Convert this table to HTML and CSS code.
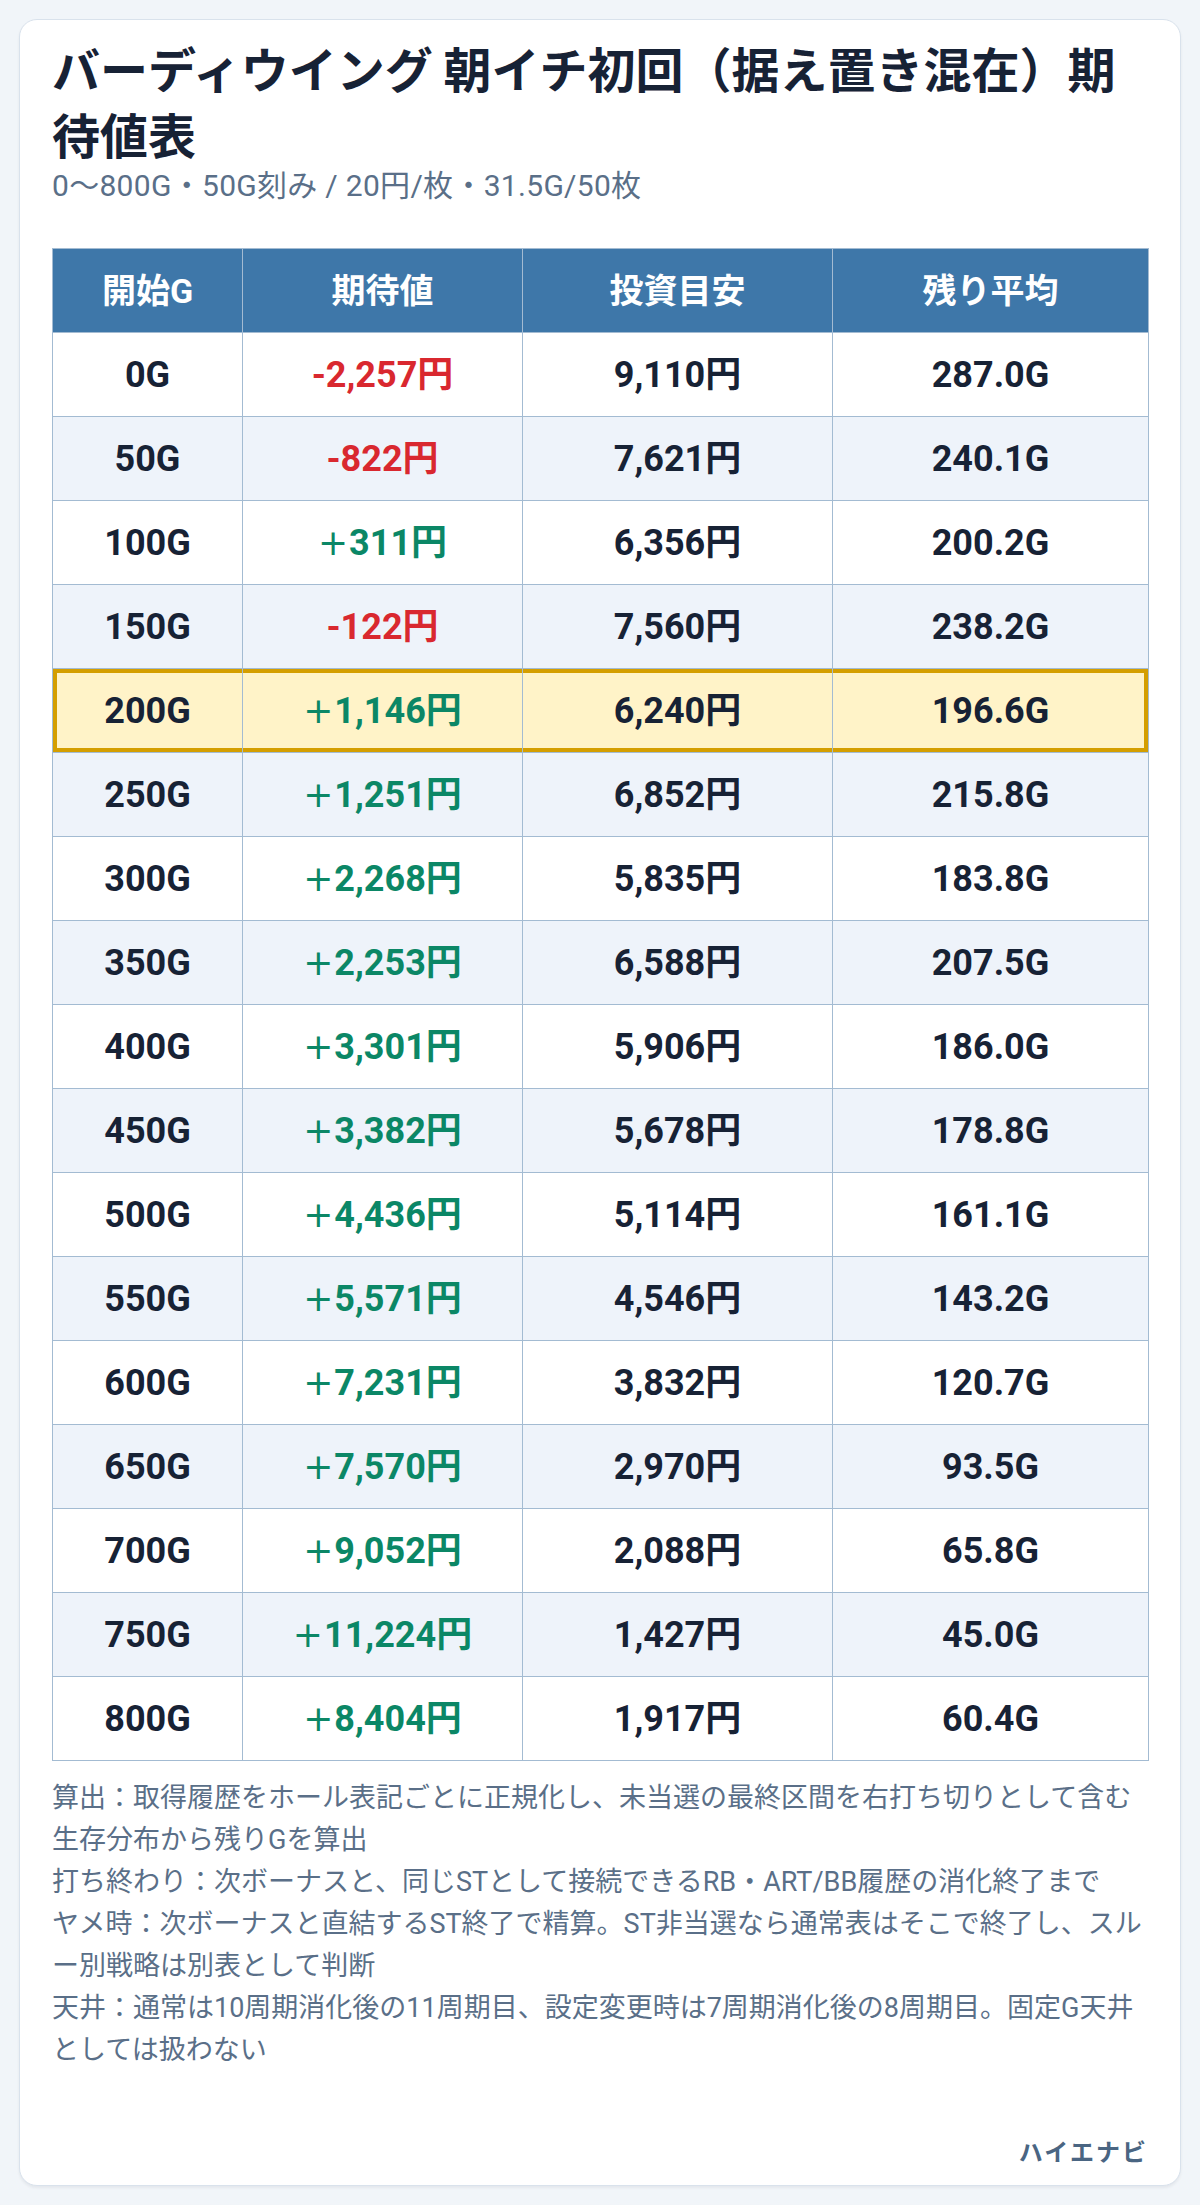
FILE: index.html
```html
<!DOCTYPE html>
<html lang="ja">
<head>
<meta charset="utf-8">
<title>バーディウイング 朝イチ初回 期待値表</title>
<link rel="stylesheet" href="styles.css">
</head>
<body>
<main class="card">
  <h1 class="title">バーディウイング 朝イチ初回（据え置き混在）期待値表</h1>
  <p class="subtitle">0〜800G・50G刻み / 20円/枚・31.5G/50枚</p>
  <table class="ev-table">
    <colgroup>
      <col class="c1"><col class="c2"><col class="c3"><col class="c4">
    </colgroup>
    <thead>
      <tr><th>開始G</th><th>期待値</th><th>投資目安</th><th>残り平均</th></tr>
    </thead>
    <tbody>
      <tr><td>0G</td><td class="neg">-2,257円</td><td>9,110円</td><td>287.0G</td></tr>
      <tr><td>50G</td><td class="neg">-822円</td><td>7,621円</td><td>240.1G</td></tr>
      <tr><td>100G</td><td class="pos"><span class="sign">+</span>311円</td><td>6,356円</td><td>200.2G</td></tr>
      <tr><td>150G</td><td class="neg">-122円</td><td>7,560円</td><td>238.2G</td></tr>
      <tr class="hl"><td>200G</td><td class="pos"><span class="sign">+</span>1,146円</td><td>6,240円</td><td>196.6G</td></tr>
      <tr><td>250G</td><td class="pos"><span class="sign">+</span>1,251円</td><td>6,852円</td><td>215.8G</td></tr>
      <tr><td>300G</td><td class="pos"><span class="sign">+</span>2,268円</td><td>5,835円</td><td>183.8G</td></tr>
      <tr><td>350G</td><td class="pos"><span class="sign">+</span>2,253円</td><td>6,588円</td><td>207.5G</td></tr>
      <tr><td>400G</td><td class="pos"><span class="sign">+</span>3,301円</td><td>5,906円</td><td>186.0G</td></tr>
      <tr><td>450G</td><td class="pos"><span class="sign">+</span>3,382円</td><td>5,678円</td><td>178.8G</td></tr>
      <tr><td>500G</td><td class="pos"><span class="sign">+</span>4,436円</td><td>5,114円</td><td>161.1G</td></tr>
      <tr><td>550G</td><td class="pos"><span class="sign">+</span>5,571円</td><td>4,546円</td><td>143.2G</td></tr>
      <tr><td>600G</td><td class="pos"><span class="sign">+</span>7,231円</td><td>3,832円</td><td>120.7G</td></tr>
      <tr><td>650G</td><td class="pos"><span class="sign">+</span>7,570円</td><td>2,970円</td><td>93.5G</td></tr>
      <tr><td>700G</td><td class="pos"><span class="sign">+</span>9,052円</td><td>2,088円</td><td>65.8G</td></tr>
      <tr><td>750G</td><td class="pos"><span class="sign">+</span>11,224円</td><td>1,427円</td><td>45.0G</td></tr>
      <tr><td>800G</td><td class="pos"><span class="sign">+</span>8,404円</td><td>1,917円</td><td>60.4G</td></tr>
    </tbody>
  </table>
  <div class="notes">
    <p>算出：取得履歴をホール表記ごとに正規化し、未当選の最終区間を右打ち切りとして含む生存分布から残りGを算出</p>
    <p>打ち終わり：次ボーナスと、同じSTとして接続できるRB・ART/BB履歴の消化終了まで</p>
    <p>ヤメ時：次ボーナスと直結するST終了で精算。ST非当選なら通常表はそこで終了し、スルー別戦略は別表として判断</p>
    <p>天井：通常は10周期消化後の11周期目、設定変更時は7周期消化後の8周期目。固定G天井としては扱わない</p>
  </div>
  <footer class="brand">ハイエナビ</footer>
</main>
</body>
</html>
```
FILE: styles.css
```css
* { box-sizing: border-box; }

html, body {
  margin: 0;
  padding: 0;
}

body {
  background: #f1f5f9;
  padding: 19px;
  font-family: "Roboto", "Noto Sans CJK JP", sans-serif;
  color: #172235;
}

.card {
  display: flex;
  flex-direction: column;
  min-height: 2167px;
  background: #ffffff;
  border: 1px solid #d9e2ec;
  border-radius: 18px;
  box-shadow: 0 2px 3px rgba(15, 23, 42, 0.06);
  padding: 14px 32px 14px;
}

.title {
  margin: 0;
  font-family: "Noto Sans CJK JP", sans-serif;
  font-size: 48px;
  font-weight: 700;
  line-height: 66px;
  color: #172235;
}

.subtitle {
  margin: 0;
  font-size: 30px;
  line-height: 40px;
  letter-spacing: 0.3px;
  color: #5a6f88;
}

.ev-table {
  margin-top: 42px;
  width: 100%;
  border-collapse: collapse;
  table-layout: fixed;
}

.c1 { width: 190px; }
.c2 { width: 280px; }
.c3 { width: 310px; }
.c4 { width: 316px; }

.ev-table th,
.ev-table td {
  border: 1px solid #a3bbd2;
  text-align: center;
  vertical-align: middle;
  height: 84px;
  padding: 0 8px;
  font-weight: 700;
  line-height: 44px;
}

.ev-table th {
  background: #3e77a9;
  color: #ffffff;
  font-size: 34px;
}

.ev-table td {
  font-size: 36px;
  color: #172235;
}

.ev-table .sign {
  font-family: "DejaVu Sans", sans-serif;
  font-weight: 400;
  margin-right: 1px;
}

.ev-table tbody tr:nth-child(even) td {
  background: #eef3fa;
}

.ev-table td.neg { color: #d9282f; }
.ev-table td.pos { color: #0b8766; }

.ev-table tr.hl td {
  background: #fff3c8;
  box-shadow: inset 0 4px 0 #d49e00, inset 0 -4px 0 #d49e00;
}
.ev-table tr.hl td:first-child {
  box-shadow: inset 0 4px 0 #d49e00, inset 0 -4px 0 #d49e00, inset 4px 0 0 #d49e00;
}
.ev-table tr.hl td:last-child {
  box-shadow: inset 0 4px 0 #d49e00, inset 0 -4px 0 #d49e00, inset -4px 0 0 #d49e00;
}

.notes {
  margin-top: 16px;
  color: #5a6f88;
  font-size: 27px;
  line-height: 42px;
}

.notes p {
  margin: 0;
}

.brand {
  margin-top: auto;
  text-align: right;
  font-size: 24px;
  line-height: 36px;
  font-weight: 700;
  letter-spacing: 2px;
  color: #4a6582;
}
```
